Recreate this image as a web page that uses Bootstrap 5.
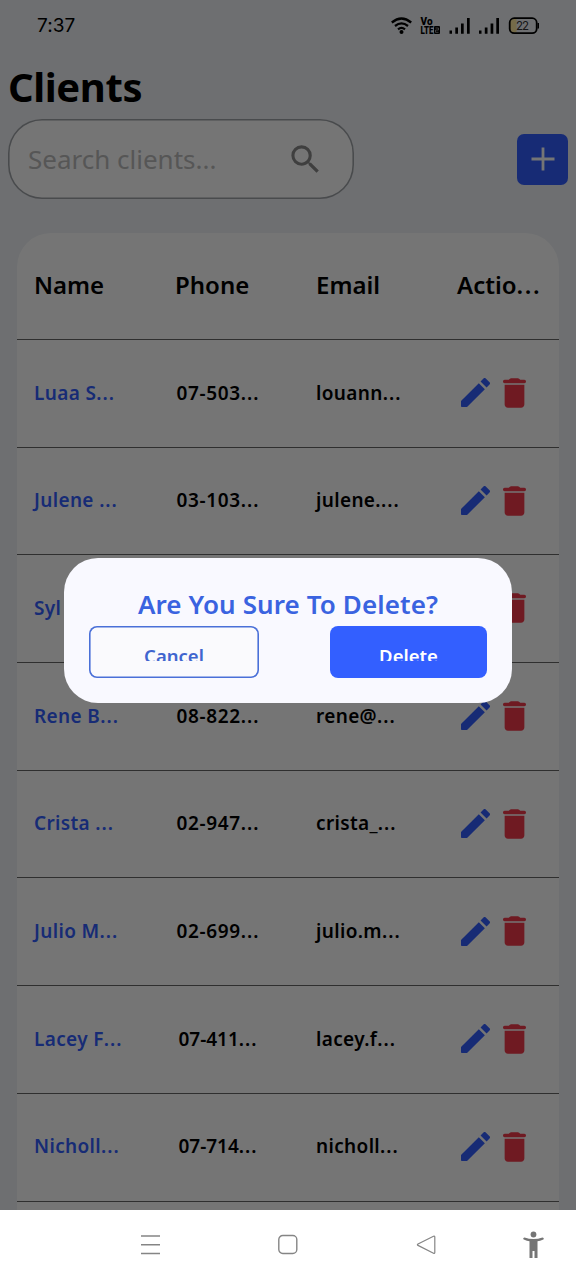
<!DOCTYPE html>
<html lang="en">
<head>
<meta charset="utf-8">
<meta name="viewport" content="width=device-width, initial-scale=1">
<title>Clients</title>
<link href="https://cdn.jsdelivr.net/npm/bootstrap@5.3.0/dist/css/bootstrap.min.css" rel="stylesheet">
<style>
:root{--brand:#335fff;--danger-red:#f23a4a}
html,body{height:100%}
body{font-family:"Noto Sans","Open Sans",sans-serif;overflow:hidden}
.phone{width:576px;height:1280px}
.screen{height:1209.5px;background:#eff2f6;color:#000}
.statusbar{height:52px;padding:0 36px 0 37px}
.clock{font:400 19px/52px Inter,sans-serif;letter-spacing:.1px}
.page-title{font-size:40px;font-weight:700;line-height:60px;height:67px;padding:5px 0 0 8px;letter-spacing:-.4px}
.toolbar{padding:0 8px;height:80px}
.search{width:346px;height:80px;box-shadow:inset 0 0 0 1.6px #a0a4a9;border-radius:34px;background:#fff;padding:0 32px 0 20px;font-size:26px;color:#bcbcbc}
.add-btn{width:51px;height:51px;border-radius:7px;background:var(--brand)}
.sheet{margin:34px 17px 0;background:#fff;border-radius:34px 34px 0 0;width:542px;height:1000px}
.line{display:grid;grid-template-columns:repeat(4,86px);column-gap:55px;align-items:center;height:107.7px;padding:0 17px 1px;border-bottom:1px solid #666;font-weight:600;font-size:19px;letter-spacing:.35px;white-space:nowrap}
.line.head{height:107px;font-size:24px;letter-spacing:0;padding-bottom:2px}
.dots{letter-spacing:1px}
.head .dots{letter-spacing:1.6px}
.num{letter-spacing:.6px}
.num.slim{letter-spacing:0}
.who{color:var(--brand)}
.scrim{position:absolute;inset:0;height:1209.5px;background:rgba(0,0,0,.54)}
.dialog{position:absolute;left:64px;top:558px;width:448px;height:144.5px;border-radius:34px;background:#f9f9ff;padding:27px 25px 0}
.ask{color:#3a63e0;font-weight:600;font-size:26px;line-height:38px;letter-spacing:.1px;height:41px;white-space:nowrap}
.act{height:52px;border-radius:8px;padding-top:13px;font-weight:600;font-size:18.5px;letter-spacing:0;background:var(--brand);color:#fff;width:157px}
.act.keep{width:170px;background:#fafafd;color:#4065cf;box-shadow:inset 0 0 0 1.6px #4a70d8}
.act span{display:block;height:22px;line-height:34px;overflow:hidden}
.bin{margin-left:13px}
.navbar-sys{height:70.5px;padding-left:139px}
.navbar-sys svg{margin-right:116px;flex:none}
.navbar-sys svg:nth-child(3){margin-right:86px}
.navbar-sys svg:last-child{margin-right:0}
</style>
</head>
<body>
<svg width="0" height="0" class="position-absolute">
<symbol id="pen" viewBox="3 3 18 18"><path d="M3 17.46v3.04c0 .28.22.5.5.5h3.04c.13 0 .26-.05.35-.15L17.81 9.94l-3.75-3.75L3.15 17.1c-.1.1-.15.22-.15.36zM20.71 7.04a1 1 0 0 0 0-1.41l-2.34-2.34a1 1 0 0 0-1.41 0l-1.83 1.83 3.75 3.75 1.83-1.83z"/></symbol>
<symbol id="bin" viewBox="5 3 14 18"><path d="M6 19c0 1.1.9 2 2 2h8c1.1 0 2-.9 2-2V7H6v12zM18 4h-2.500l-.71-.71c-.18-.18-.44-.29-.7-.29H9.910c-.26 0-.52.11-.7.29L8.500 4H6c-.55 0-1 .45-1 1s.45 1 1 1h12c.55 0 1-.45 1-1s-.45-1-1-1z"/></symbol>
</svg>
<div class="phone position-relative overflow-hidden bg-white">
<main class="screen overflow-hidden">
<div class="statusbar d-flex justify-content-between align-items-center">
<span class="clock">7:37</span>
<svg width="150" height="26" viewBox="390 13 150 26">
<g fill="none" stroke="#000" stroke-width="2.300"><path d="M391.800 22.500q9.700-8 19.400 0M395 26q6.500-5.200 13 0M398 29.300q3.500-2.800 7 0"/></g><circle cx="401.500" cy="32" r="2"/>
<text x="420.500" y="25" font-family="Roboto" font-weight="900" font-size="10" textLength="12" lengthAdjust="spacingAndGlyphs">Vo</text>
<text x="420.500" y="33.800" font-family="Roboto" font-weight="900" font-size="10" textLength="13" lengthAdjust="spacingAndGlyphs">LTE</text>
<rect x="434" y="26" width="6" height="8" rx="1"/><path d="M435.500 28h3v2h-3v2.300h3" fill="none" stroke="#aaa" stroke-width=".8"/>
<path d="M449.500 30.500h2.500v3.300h-2.500zM455.300 27.500h2.700v6.300h-2.700zM461 23.500h2.700v10.300H461zM467 18h2.700v15.800H467zM479 30.500h2.500v3.300H479zM484.800 27.500h2.700v6.300h-2.700zM490.600 23.500h2.700v10.300h-2.700zM496.300 18h2.700v15.800h-2.700z"/>
<path d="M513 19h3.500v13.500H513q-3 0-3-3.500v-6.500q0-3.500 3-3.500z" fill="#ffe9a0"/>
<rect x="509.700" y="18.200" width="27" height="15" rx="4.500" fill="none" stroke="#000" stroke-width="1.800"/><path d="M537.500 23h1.500v5.500h-1.500z"/>
<text x="516" y="30" font-family="Inter" font-size="11.500" fill="#333" textLength="13">22</text>
</svg>
</div>
<h1 class="page-title mb-0">Clients</h1>
<div class="toolbar d-flex justify-content-between align-items-center">
<div class="search d-flex justify-content-between align-items-center"><span>Search clients...</span>
<svg width="33" height="33" viewBox="1.500 1.500 21 21" fill="#8a8a8a"><path d="M15.500 14h-.79l-.28-.27A6.470 6.470 0 0 0 16 9.500 6.500 6.500 0 1 0 9.500 16c1.610 0 3.090-.59 4.230-1.570l.27.28v.79l5 4.990L20.490 19l-4.990-5zm-6 0C7.010 14 5 11.990 5 9.500S7.010 5 9.500 5 14 7.010 14 9.500 11.990 14 9.500 14z"/></svg></div>
<button class="add-btn btn border-0 p-0 d-flex align-items-center justify-content-center" aria-label="Add client"><svg width="24" height="24" viewBox="0 0 24 24"><path d="M12 .5v23M.5 12h23" stroke="#fff" stroke-width="2.800"/></svg></button>
</div>
<section class="sheet" id="clients">
<div class="line head"><span>Name</span><span>Phone</span><span>Email</span><span>Actio<span class="dots">...</span></span></div>
</section>
</main>
<nav class="navbar-sys d-flex align-items-center">
<svg width="22" height="22" viewBox="0 0 22 22"><path d="M2 2h19M2 10.700h19M2 19.500h19" stroke="#858585" stroke-width="1.400"/></svg>
<svg width="22" height="22" viewBox="0 0 22 22"><rect x="1.800" y="1.500" width="18" height="18" rx="4" fill="none" stroke="#858585" stroke-width="1.400"/></svg>
<svg width="22" height="22" viewBox="0 0 22 22"><path d="M18.500 2.200 3 10q-1.200.7 0 1.400l15.500 7.900q1.300.5 1.300-.8V3q0-1.300-1.300-.8z" fill="none" stroke="#858585" stroke-width="1.200"/></svg>
<svg width="22" height="28" viewBox="0 0 22 28" fill="#757575"><circle cx="10.500" cy="3.500" r="2.900"/><path d="M1.500 6.500q9 3.200 18 0 1.500 0 1.300 1.500-.2 1-6.300 2.300V27h-3v-7h-2v7h-3V10.300Q.7 9 .2 8 0 6.500 1.500 6.500z"/></svg>
</nav>
<div class="scrim"></div>
<div class="dialog" role="dialog">
<h2 class="ask text-center mb-0">Are You Sure To Delete?</h2>
<div class="d-flex justify-content-between">
<button class="act keep btn border-0 pb-0 px-0 d-flex align-items-start justify-content-center"><span>Cancel</span></button>
<button class="act btn border-0 pb-0 px-0 d-flex align-items-start justify-content-center"><span>Delete</span></button>
</div>
</div>
</div>
<script>
const rows=[["Luaa S...","07-503...","louann..."],["Julene ...","03-103...","julene...."],["Syl","",""],["Rene B...","08-822...","rene@..."],["Crista ...","02-947...","crista_..."],["Julio M...","02-699...","julio.m..."],["Lacey F...","07-411...","lacey.f..."],["Nicholl...","07-714...","nicholl..."]];
const cut=t=>t.replace(/\.{3}$/,'<span class="dots">...</span>');
document.getElementById("clients").insertAdjacentHTML("beforeend",rows.map(r=>`<div class="line"><span class="who">${cut(r[0])}</span><span class="num text-center ${/-(411|714)/.test(r[1])?"slim":""}">${cut(r[1])}</span><span>${cut(r[2])}</span><span class="d-flex align-items-center ps-1"><svg width="29" height="29" fill="var(--brand)"><use href="#pen"/></svg><svg class="bin" width="23" height="30" fill="var(--danger-red)"><use href="#bin"/></svg></span></div>`).join(""));
</script>
<script src="https://cdn.jsdelivr.net/npm/bootstrap@5.3.0/dist/js/bootstrap.bundle.min.js"></script>
</body>
</html>
